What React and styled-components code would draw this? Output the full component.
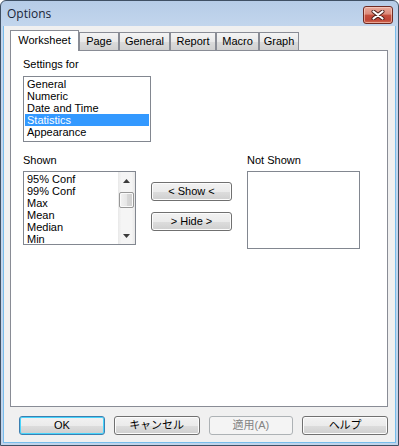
import React from 'react'
import styled, { createGlobalStyle } from 'styled-components'

const GlobalStyle = createGlobalStyle`
  html, body {
    margin: 0;
    padding: 0;
    background: #ffffff;
  }
  body {
    font-family: "Liberation Sans", "Noto Sans CJK JP", Arial, sans-serif;
    font-size: 11px;
    color: #000000;
  }
  * {
    box-sizing: border-box;
  }
`

const Window = styled.div`
  width: 399px;
  height: 446px;
  border: 1px solid #3f5064;
  border-radius: 6px 6px 0 0;
  background: linear-gradient(#b6cce7, #c3d6ed 26px, #c1d5ec);
  padding: 0 2px 2px;
  display: flex;
  flex-direction: column;
`

const TitleBar = styled.div`
  height: 25px;
  display: flex;
  align-items: flex-start;
  justify-content: space-between;
  padding: 0 3px 0 4px;
  flex-shrink: 0;
`

const Title = styled.span`
  font-family: "Open Sans", "Noto Sans", sans-serif;
  font-size: 12px;
  line-height: 16px;
  margin-top: 5px;
  color: #1a2638;
`

const CloseButton = styled.div`
  width: 30px;
  height: 18px;
  margin-top: 5px;
  border: 1px solid #6f2a22;
  border-radius: 3px;
  background: linear-gradient(#e9aa9c 0%, #dc8a7a 45%, #c5503e 50%, #bf4536 80%, #d26a52 100%);
  box-shadow: inset 0 0 0 1px rgba(255, 220, 210, 0.55);
  display: flex;
  align-items: center;
  justify-content: center;
`

const Client = styled.div`
  flex: 1;
  border: 1px solid #78bdec;
  border-top: none;
  background: #f0f0f0;
  padding: 4px 7px 0 6px;
  display: flex;
  flex-direction: column;
`

const TabStrip = styled.div`
  height: 20px;
  display: flex;
  align-items: flex-end;
`

const Tab = styled.div`
  width: ${(p) => p.$w}px;
  height: ${(p) => (p.$active ? 21 : 18)}px;
  border: 1px solid #898c95;
  border-bottom: none;
  margin-bottom: ${(p) => (p.$active ? -1 : 0)}px;
  position: relative;
  z-index: ${(p) => (p.$active ? 1 : 0)};
  background: ${(p) =>
    p.$active ? '#ffffff' : 'linear-gradient(#f4f4f4, #e9e9e9 50%, #dcdcdc 50%, #d0d0d0)'};
  text-align: center;
  line-height: ${(p) => (p.$active ? 18 : 17)}px;
  white-space: nowrap;
`

const Panel = styled.div`
  height: 357px;
  border: 1px solid #898c95;
  background: #ffffff;
  padding: 7px 0 0 12px;
`

const Label = styled.div`
  line-height: 13px;
  height: 13px;
`

const ListBox = styled.div`
  width: ${(p) => p.$w}px;
  height: ${(p) => p.$h}px;
  margin-top: ${(p) => p.$mt || 4}px;
  border: 1px solid #828790;
  background: #ffffff;
  display: flex;
  overflow: hidden;
`

const Items = styled.div`
  flex: 1;
  padding: 1px;
  overflow: hidden;
`

const Item = styled.div`
  line-height: 12px;
  height: 12px;
  padding: 0 2px;
  white-space: nowrap;
  background: ${(p) => (p.$selected ? '#3399ff' : 'transparent')};
  color: ${(p) => (p.$selected ? '#ffffff' : '#000000')};
`

const ScrollBar = styled.div`
  width: 17px;
  display: flex;
  flex-direction: column;
  background: linear-gradient(90deg, #e8e8e8, #f5f5f5 20%, #f5f5f5 80%, #e8e8e8);
`

const ArrowCell = styled.div`
  height: 17px;
  display: flex;
  align-items: center;
  justify-content: center;
`

const Thumb = styled.div`
  height: 16px;
  margin: 3px 1px 0;
  border: 1px solid #979797;
  border-radius: 2px;
  background: linear-gradient(90deg, #f2f2f2, #e6e6e6 50%, #d8d8d8 51%, #cfcfcf);
  box-shadow: inset 0 0 0 1px #fafafa;
`

const Track = styled.div`
  flex: 1;
`

const Row = styled.div`
  display: flex;
  align-items: flex-start;
  margin-top: 12px;
`

const Column = styled.div`
  display: flex;
  flex-direction: column;
  margin-left: ${(p) => p.$ml || 0}px;
  margin-top: ${(p) => p.$mt || 0}px;
`

const Button = styled.div`
  width: ${(p) => p.$w}px;
  height: 19px;
  margin-top: ${(p) => p.$mt || 0}px;
  border: 1px solid ${(p) => (p.$disabled ? '#adb2b5' : p.$default ? '#3c7fb1' : '#707070')};
  border-radius: 3px;
  background: ${(p) =>
    p.$disabled
      ? '#f4f4f4'
      : 'linear-gradient(#f2f2f2 0%, #ebebeb 50%, #dddddd 51%, #cfcfcf 100%)'};
  box-shadow: ${(p) =>
    p.$default
      ? 'inset 0 0 0 1px #48d4fb'
      : p.$disabled
      ? 'none'
      : 'inset 0 0 0 1px #fcfcfc'};
  color: ${(p) => (p.$disabled ? '#838383' : '#000000')};
  display: flex;
  align-items: center;
  justify-content: center;
  line-height: 13px;
  white-space: nowrap;
`

const ButtonRow = styled.div`
  display: flex;
  gap: 9px;
  margin-top: 9px;
  padding-left: 9px;
`

const CloseIcon = () => (
  <svg width="14" height="10" viewBox="0 0 14 10">
    <path d="M2.5 1.5 L11.5 8.5 M11.5 1.5 L2.5 8.5" stroke="#4b1f1a" strokeWidth="4" strokeLinecap="round" />
    <path d="M2.5 1.5 L11.5 8.5 M11.5 1.5 L2.5 8.5" stroke="#ffffff" strokeWidth="2.2" strokeLinecap="round" />
  </svg>
)

const Arrow = ({ down }) => (
  <svg width="7" height="4" viewBox="0 0 7 4">
    <path d={down ? 'M0 0 H7 L3.5 4 Z' : 'M0 4 H7 L3.5 0 Z'} fill="#3b3b3b" />
  </svg>
)

const tabs = [
  { name: 'Worksheet', w: 69, active: true },
  { name: 'Page', w: 40 },
  { name: 'General', w: 51 },
  { name: 'Report', w: 46 },
  { name: 'Macro', w: 43 },
  { name: 'Graph', w: 40 },
]

const settings = ['General', 'Numeric', 'Date and Time', 'Statistics', 'Appearance']
const shown = ['95% Conf', '99% Conf', 'Max', 'Mean', 'Median', 'Min']

export default function App() {
  return (
    <>
      <GlobalStyle />
      <Window>
        <TitleBar>
          <Title>Options</Title>
          <CloseButton>
            <CloseIcon />
          </CloseButton>
        </TitleBar>
        <Client>
          <TabStrip>
            {tabs.map((t) => (
              <Tab key={t.name} $w={t.w} $active={t.active}>
                {t.name}
              </Tab>
            ))}
          </TabStrip>
          <Panel>
            <Label>Settings for</Label>
            <ListBox $w={128} $h={66} $mt={5}>
              <Items>
                {settings.map((s) => (
                  <Item key={s} $selected={s === 'Statistics'}>
                    {s}
                  </Item>
                ))}
              </Items>
            </ListBox>
            <Row>
              <Column>
                <Label>Shown</Label>
                <ListBox $w={113} $h={74}>
                  <Items>
                    {shown.map((s) => (
                      <Item key={s}>{s}</Item>
                    ))}
                  </Items>
                  <ScrollBar>
                    <ArrowCell>
                      <Arrow />
                    </ArrowCell>
                    <Thumb />
                    <Track />
                    <ArrowCell>
                      <Arrow down />
                    </ArrowCell>
                  </ScrollBar>
                </ListBox>
              </Column>
              <Column $ml={15} $mt={28}>
                <Button $w={81}>&lt; Show &lt;</Button>
                <Button $w={81} $mt={11}>&gt; Hide &gt;</Button>
              </Column>
              <Column $ml={15}>
                <Label>Not Shown</Label>
                <ListBox $w={113} $h={78} />
              </Column>
            </Row>
          </Panel>
          <ButtonRow>
            <Button $w={86} $default>OK</Button>
            <Button $w={86}>キャンセル</Button>
            <Button $w={85} $disabled>適用(A)</Button>
            <Button $w={86}>ヘルプ</Button>
          </ButtonRow>
        </Client>
      </Window>
    </>
  )
}
